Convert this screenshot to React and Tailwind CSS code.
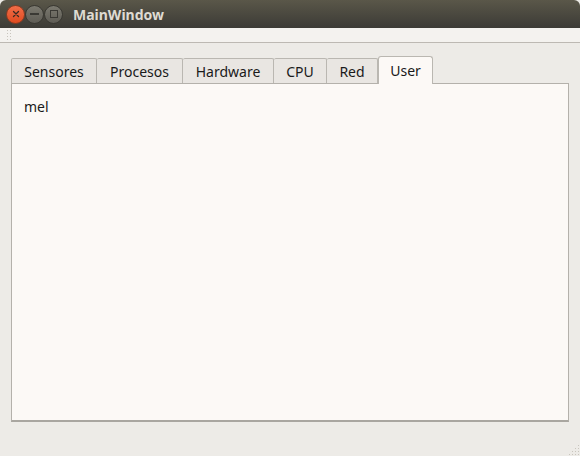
const tabs = [
  { label: 'Sensores', w: 86 },
  { label: 'Procesos', w: 86 },
  { label: 'Hardware', w: 91 },
  { label: 'CPU', w: 53 },
  { label: 'Red', w: 51 },
]

function Dots({ cols, rows }) {
  return (
    <div className="flex flex-col gap-[2px]">
      {Array.from({ length: rows }).map((_, r) => (
        <div key={r} className="flex gap-[2px]">
          {Array.from({ length: cols }).map((_, c) => (
            <span key={c} className="w-[1px] h-[1px] bg-[#c9c5bd]" />
          ))}
        </div>
      ))}
    </div>
  )
}

export default function App() {
  return (
    <div
      className="w-[580px] h-[456px] flex flex-col bg-[#edebe7] overflow-hidden"
      style={{ fontFamily: '"Noto Sans", "Open Sans", sans-serif' }}
    >
      {/* title bar */}
      <div className="h-[28px] shrink-0 flex items-center rounded-t-[6px] bg-gradient-to-b from-[#5a5749] to-[#3c3b36]">
        <div className="flex items-center pl-[6px]">
          <div className="w-[19px] h-[19px] rounded-full bg-gradient-to-b from-[#f26d47] to-[#df4a1e] border border-[#8a3b22] flex items-center justify-center">
            <svg width="8" height="8" viewBox="0 0 8 8" stroke="#3b2a22" strokeWidth="1.3" strokeLinecap="round">
              <path d="M1.5 1.5l5 5M6.5 1.5l-5 5" />
            </svg>
          </div>
          <div className="w-[19px] h-[19px] rounded-full bg-gradient-to-b from-[#7b796f] to-[#5e5c55] border border-[#393832] flex items-center justify-center">
            <span className="w-[9px] h-[2px] bg-[#3a3934]" />
          </div>
          <div className="w-[19px] h-[19px] rounded-full bg-gradient-to-b from-[#7b796f] to-[#5e5c55] border border-[#393832] flex items-center justify-center">
            <span className="w-[8px] h-[8px] border-[1.5px] border-[#3a3934]" />
          </div>
        </div>
        <span className="ml-[10px] text-[14px] font-bold text-[#dfdbd2]">MainWindow</span>
      </div>

      {/* tool area */}
      <div className="h-[15px] shrink-0 bg-[#f4f2ef] border-b border-[#bdb9b3] flex items-center pl-[7px]">
        <Dots cols={2} rows={4} />
      </div>

      {/* tabs */}
      <div className="flex-1 flex flex-col px-[11px] pt-[13px]">
        <div className="flex items-end h-[27px]">
          {tabs.map((t, i) => (
            <div
              key={t.label}
              style={{ width: t.w }}
              className={`h-[25px] flex items-center justify-center text-[14px] text-[#1a1a1a] bg-[#e9e6e2] border-t border-r border-[#bab7b1] rounded-t-[2px] ${i === 0 ? 'border-l' : ''}`}
            >
              {t.label}
            </div>
          ))}
          <div className="w-[55px] h-[28px] -mb-[1px] flex items-center justify-center text-[14px] text-[#1a1a1a] bg-[#fcf9f6] border border-b-0 border-[#bab7b1] rounded-t-[3px] relative z-10">
            User
          </div>
        </div>
        <div className="h-[339px] bg-[#fcf9f6] border border-[#b4b1ab] border-b-2 border-b-[#a9a6a0] px-[12px] pt-[10px]">
          <span className="text-[14px] text-[#1a1a1a]">mel</span>
        </div>
        <div className="flex-1 flex items-end justify-end pb-[1px] -mr-[10px]">
          <div className="flex flex-col items-end gap-[2px]">
            <span className="w-[1px] h-[1px] bg-[#c9c5bd]" />
            <div className="flex gap-[2px]"><span className="w-[1px] h-[1px] bg-[#c9c5bd]" /><span className="w-[1px] h-[1px] bg-[#c9c5bd]" /></div>
            <div className="flex gap-[2px]"><span className="w-[1px] h-[1px] bg-[#c9c5bd]" /><span className="w-[1px] h-[1px] bg-[#c9c5bd]" /><span className="w-[1px] h-[1px] bg-[#c9c5bd]" /></div>
            <div className="flex gap-[2px]"><span className="w-[1px] h-[1px] bg-[#c9c5bd]" /><span className="w-[1px] h-[1px] bg-[#c9c5bd]" /><span className="w-[1px] h-[1px] bg-[#c9c5bd]" /><span className="w-[1px] h-[1px] bg-[#c9c5bd]" /></div>
          </div>
        </div>
      </div>
    </div>
  )
}
